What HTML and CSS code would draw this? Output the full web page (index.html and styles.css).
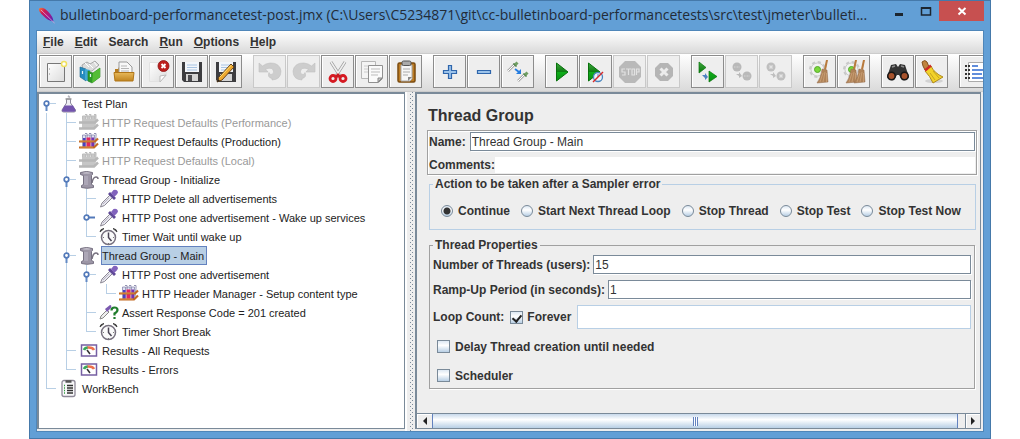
FILE: index.html
```
<!DOCTYPE html>
<html lang="en">
<head>
<meta charset="utf-8">
<title>bulletinboard-performancetest-post.jmx</title>
<link rel="stylesheet" href="styles.css">
</head>
<body>
<svg class="defs" aria-hidden="true">
  <defs>
    <linearGradient id="play" x1="0" y1="0" x2="0" y2="1"><stop offset="0" stop-color="#3fa83f"/><stop offset=".5" stop-color="#0c7c10"/><stop offset=".5" stop-color="#0fb01a"/><stop offset="1" stop-color="#0a8a12"/></linearGradient>
    <linearGradient id="paper" x1="0" y1="0" x2="1" y2="1"><stop offset="0" stop-color="#fff"/><stop offset="1" stop-color="#dcdcdc"/></linearGradient>
    <linearGradient id="gold" x1="0" y1="0" x2="0" y2="1"><stop offset="0" stop-color="#e8b95a"/><stop offset="1" stop-color="#c08420"/></linearGradient>
    <linearGradient id="feather" x1="0" y1="0" x2="1" y2="1"><stop offset="0" stop-color="#f08a3c"/><stop offset=".3" stop-color="#d01850"/><stop offset=".65" stop-color="#9a1890"/><stop offset="1" stop-color="#3a2ab8"/></linearGradient>
    <symbol id="flask" viewBox="0 0 20 19"><path d="M7.500 5h4v4l5 7q.5 2-1.500 2H4.500q-2 0-1.500-2l4.500-7z" fill="#eeeef4" stroke="#8d8a9c"/><path d="M5.500 11.500h8.500l2.500 4.500q0 1.700-1.500 1.700H4.500q-1.700 0-1.500-1.700z" fill="#7353ad"/><path d="M6.500 5h6" stroke="#999" stroke-width="1.500"/><path d="M8.500 3l1-2 2 2-1 1z" fill="#b4b4bc"/></symbol>
    <symbol id="rack" viewBox="0 0 20 19"><path d="M3.500 3h3v12h-3zM8 3h3v12H8zM12.500 3h3v12h-3z" fill="#dfe2f2" stroke="#8888b0" stroke-width=".8"/><path d="M4 6h2.500v9H4z" fill="#4c40c0"/><path d="M7.500 5.500h4V15h-4z" fill="#e02860"/><path d="M12.500 5.500h2.500V15h-2.500z" fill="#7a30b0"/><path d="M6 1.500h2v3M10 1.500h2v3M15 1.500h2v3l-1 8" fill="none" stroke="#9292b2"/><path d="M0 9.500h16l3-3M0 15.500h15l4-4" fill="none" stroke="#c46a22" stroke-width="2.200"/><path d="M1 9h14M1 15h13" stroke="#e5a054" stroke-width=".7"/></symbol>
    <symbol id="rack-off" viewBox="0 0 20 19"><path d="M3.500 3h3v12h-3zM8 3h3v12H8zM12.500 3h3v12h-3zM6 1.500h2v3M10 1.500h2v3M15 1.500h2v3l-1 8" fill="#c8c8c8" stroke="#bdbdbd"/><path d="M3 6h13v9H3z" fill="#c6c6c6"/><path d="M0 9.500h16l3-3M0 15.500h15l4-4" fill="none" stroke="#b7b7b7" stroke-width="2.500"/></symbol>
    <symbol id="spool" viewBox="0 0 20 19"><path d="M1.500 2.500q6-2 12 0v2l-1 1v9l2 1v2q-7 1.600-12 0v-2l2-1v-9l-3-1z" fill="#9c96a6" stroke="#777182"/><path d="M3 3q5-1.600 9 0-4 1.200-9 0z" fill="#d0ccd6"/><path d="M6 6v9M8 6v9" stroke="#bdb8c8"/><path d="M13 13q1-6 4-6 2 0 2 2" fill="none" stroke="#77717f" stroke-width="1.500"/></symbol>
    <symbol id="dropper" viewBox="0 0 20 19"><path d="M1.500 18l1.500-4 8-8 2.500 2.500-8 8z" fill="#e6e6ee" stroke="#8c8894"/><path d="M4 15l6-6" stroke="#bab5c5"/><path d="M9 5l2-2 6 6-2 2z" fill="#5f4896"/><path d="M12 4l2.500-3Q18 0 19 3q0 2-4 5z" fill="#8263bd"/></symbol>
    <symbol id="clock" viewBox="0 0 20 19"><circle cx="9.500" cy="10.500" r="7" fill="#fafafa" stroke="#77717f" stroke-width="1.500"/><path d="M9.500 5.500v5l3 3.500" fill="none" stroke="#4b4555" stroke-width="1.500"/><path d="M1 5q0-3 4-3.500zM18 5q0-3-4-3.500z" fill="#444" stroke="#444"/><path d="M4 10.500h1M14 10.500h1M9.500 16v1" stroke="#777"/></symbol>
    <symbol id="assert" viewBox="0 0 20 19"><path d="M1 16l1-3 6-6 2 2-6 6z" fill="#eee" stroke="#888"/><path d="M6 6l5-4q2 0 1 3l-4 4z" fill="#7b5ab0"/><path d="M12.500 7.500q0-3 3-3 3 0 3 2.500 0 1.800-3 3.500v2M15.500 14v2" fill="none" stroke="#1f7d2c" stroke-width="2.200"/></symbol>
    <symbol id="gauge" viewBox="0 0 20 19"><path d="M2.500 4h15v11h-15z" fill="#fff" stroke="#765fa3" stroke-width="1.500"/><path d="M5 9q1-2.500 4-2.500" fill="none" stroke="#37a85c" stroke-width="2.500"/><path d="M8.500 6.500q5-.5 6.500 2.500" fill="none" stroke="#ec714d" stroke-width="2.500"/><path d="M8 9l3 4" stroke="#333" stroke-width="1.500"/></symbol>
    <symbol id="bench" viewBox="0 0 20 19"><rect x="3" y="1.500" width="13" height="16" rx="2" fill="#f8f8fa" stroke="#8e8998" stroke-width="1.300"/><path d="M6.500 2.500h6" stroke="#555" stroke-width="2.500"/><path d="M8 6.500h6M8 9h6M8 11.500h6M8 14h6" stroke="#333" stroke-width="1.300"/><path d="M5 6.500h1M5 9h1M5 11.500h1M5 14h1" stroke="#2f9d3c" stroke-width="1.600"/></symbol>
    <symbol id="key-down" viewBox="0 0 20 19"><path d="M7.500 11v6" stroke="#638ac5" stroke-width="2"/><path d="M11 9.500h6" stroke="#b8cfe5"/><circle cx="7.500" cy="9.500" r="2.300" fill="#fff" stroke="#5279b9" stroke-width="1.700"/></symbol>
    <symbol id="key-right" viewBox="0 0 20 19"><path d="M10 9.500h6" stroke="#5279b9" stroke-width="2"/><circle cx="7.500" cy="9.500" r="2.300" fill="#fff" stroke="#5279b9" stroke-width="1.700"/></symbol>
    <symbol id="undo" viewBox="0 0 24 24"><path d="M1 3v9h9L7.500 9Q15 6.500 15.500 11.500q.5 3-2.500 3-2 0-2-2-2 5 3 6v1.500q9-.5 9-9Q21.500 2.500 12 3 7.500 3.500 4.500 6z" fill="#cdcdcd" stroke="#c0c0c0" stroke-width=".6"/></symbol>
    <symbol id="broom" viewBox="0 0 24 24"><path d="M18 0h2l-2 10-2-1z" fill="#b87a3d"/><path d="M14 9l5 1 1 12-11 1q4-5 5-14z" fill="#b08358" stroke="#946a48" stroke-width=".5"/><path d="M15 13l-3 9M17 12l-2 10M18.500 13v9" stroke="#d0a67c" stroke-width=".7"/></symbol>
    <symbol id="gear" viewBox="0 0 24 24"><circle cx="9.500" cy="9.500" r="7" fill="#e6e6e6" stroke="#c9c9c9" stroke-width="3" stroke-dasharray="3 2.500"/><circle cx="9.500" cy="9.500" r="6.500" fill="#f2f2f2" stroke="#ccc"/><circle cx="9.500" cy="9.500" r="3" fill="#7bd83c" stroke="#57a82a"/></symbol>
  </defs>
</svg>

<main class="window">
  <header class="titlebar">
    <svg class="logo" viewBox="0 0 18 18" aria-hidden="true"><path d="M1 2.500q4-2.500 9 3 5 5 5.500 10-6-1-10-5.500Q0 5 1 2.500z" fill="url(#feather)"/><path d="M3 4l13.500 13" stroke="#e8a8d8" stroke-width=".8"/></svg>
    <h1 class="caption">bulletinboard-performancetest-post.jmx (C:\Users\C5234871\git\cc-bulletinboard-performancetests\src\test\jmeter\bulleti...</h1>
    <div class="controls">
      <button class="control" aria-label="Minimize"><svg viewBox="0 0 12 12"><path d="M2 9.500h8" stroke="#1c2630" stroke-width="3"/></svg></button>
      <button class="control" aria-label="Maximize"><svg viewBox="0 0 12 12"><path d="M1.500 3h9v7h-9z" fill="none" stroke="#1c2630" stroke-width="1.500"/><path d="M1 3h10" stroke="#1c2630" stroke-width="2"/></svg></button>
      <button class="control close" aria-label="Close"><svg viewBox="0 0 12 12"><path d="M2.500 3l7 6.500M9.500 3l-7 6.500" stroke="#fff" stroke-width="2"/></svg></button>
    </div>
  </header>

  <div class="client">
    <nav class="menubar">
      <button class="menu"><u>F</u>ile</button>
      <button class="menu"><u>E</u>dit</button>
      <button class="menu">Search</button>
      <button class="menu"><u>R</u>un</button>
      <button class="menu"><u>O</u>ptions</button>
      <button class="menu"><u>H</u>elp</button>
    </nav>

    <div class="toolbar">
      <div class="group">
        <button class="tool" aria-label="New"><svg viewBox="0 0 24 24"><path d="M3.500 3.500h17v18h-17z" fill="url(#paper)" stroke="#777"/><path d="M5 9h1M5 14h1" stroke="#888"/><circle cx="20" cy="4" r="2.500" fill="#fff" stroke="#f0e060" stroke-width="1.500"/></svg></button>
        <button class="tool" aria-label="Templates"><svg viewBox="0 0 24 24"><path d="M4 5l5-3 3 2 5-3 4 4-7 6H5z" fill="#dcdcdc" stroke="#999" stroke-width=".8"/><path d="M7 3l4 4M11 4l4 4M16 2l3 4" stroke="#fff"/><path d="M2 7l6 2v12l-6-4z" fill="#268cc0" stroke="#18638c" stroke-width=".6"/><path d="M7 9l5 1v12l-5-2z" fill="#42a8d2"/><path d="M10 11l5 2 7-5v9l-8 6-4-2z" fill="#2e9b26" stroke="#237c1d" stroke-width=".6"/><path d="M15 13l7-5v9l-8 6z" fill="#54bd35"/><path d="M4.500 11v3M12.500 14v3" stroke="#e4f4f4" stroke-width="1.200"/></svg></button>
        <button class="tool" aria-label="Open"><svg viewBox="0 0 24 24"><path d="M3 13V9h3l1-2h13v14H3z" fill="#b87d20"/><path d="M7 2h8l5 5v9H7z" fill="#f8f8f8" stroke="#999"/><path d="M9 6h6M9 8.500h8M9 11h8" stroke="#b5b5b5"/><path d="M2 12.500h20l-1 8.500H3z" fill="url(#gold)" stroke="#b17618"/></svg></button>
        <button class="tool" aria-label="Close plan"><svg viewBox="0 0 24 24"><path d="M3.500 2.500h17v13l-6 6h-11z" fill="url(#paper)" stroke="#e2e2e2"/><path d="M20 15l-6 7v-6z" fill="#fff" stroke="#bbb"/><circle cx="17.500" cy="6" r="5.500" fill="#bd1f1d" stroke="#8e1414" stroke-width=".8"/><path d="M15.500 4l4 4M19.500 4l-4 4" stroke="#fff" stroke-width="1.800"/></svg></button>
        <button class="tool" aria-label="Save"><svg viewBox="0 0 24 24"><path d="M2 2h20v20H4l-2-2z" fill="#3d3d40"/><path d="M5 2h14v10H5z" fill="#f3f6fa"/><path d="M7 5h10M7 7.500h10M7 10h10" stroke="#a8c4e3"/><path d="M6 14h12v7H6z" fill="#d4d4d4"/><path d="M8 15h4v6H8z" fill="#4c4c50"/></svg></button>
        <button class="tool" aria-label="Save as"><svg viewBox="0 0 24 24"><path d="M2 2h20v20H4l-2-2z" fill="#3d3d40"/><path d="M5 2h14v10H5z" fill="#f3f6fa"/><path d="M7 5h10M7 7.500h10M7 10h10" stroke="#a8c4e3"/><path d="M6 14h12v7H6z" fill="#d4d4d4"/><path d="M3 22l2-5L17 4l3 3L8 20z" fill="#efa92f" stroke="#684218"/><path d="M5.500 17.500L17.500 5" stroke="#ffe37a"/><path d="M3 22l1-3 2 2z" fill="#222"/></svg></button>
      </div>
      <div class="group">
        <button class="tool" disabled aria-label="Undo"><svg viewBox="0 0 24 24"><use href="#undo"/></svg></button>
        <button class="tool" disabled aria-label="Redo"><svg viewBox="0 0 24 24"><use href="#undo" transform="translate(24 0) scale(-1 1)"/></svg></button>
        <button class="tool" aria-label="Cut"><svg viewBox="0 0 24 24"><path d="M5 2l9 14M19 2l-9 14" stroke="#999" stroke-width="3"/><path d="M5 2l9 14M19 2l-9 14" stroke="#f0f0f0" stroke-width="1.500"/><circle cx="7" cy="18.500" r="3" fill="none" stroke="#d51a22" stroke-width="2.800"/><circle cx="17" cy="18.500" r="3" fill="none" stroke="#d51a22" stroke-width="2.800"/><path d="M9 16l3-3 3 3-3 2z" fill="#c81a20"/></svg></button>
        <button class="tool" aria-label="Copy"><svg viewBox="0 0 24 24"><path d="M1.500 1.500h14v17h-14z" fill="#f4f4f4" stroke="#b7b7b7"/><path d="M4 6h8M4 9h8M4 12h4" stroke="#ccc"/><path d="M8.500 5.500h14v13l-4 4h-10z" fill="#fafafa" stroke="#909090"/><path d="M22 18h-4v4z" fill="#c9c9c9" stroke="#888"/><path d="M11 9h9M11 12h9M11 15h7" stroke="#bbb"/></svg></button>
        <button class="tool" aria-label="Paste"><svg viewBox="0 0 24 24"><rect x="4" y="3" width="17" height="19" rx="1.500" fill="#bc7c24" stroke="#7b4b0f" stroke-width="1.500"/><path d="M7 5h11v14l-2 2H7z" fill="#f6f6f6" stroke="#aaa"/><path d="M9 9h7M9 12h7M9 15h5" stroke="#aaa"/><path d="M18 17h-4v4z" fill="#888"/><rect x="8" y="1" width="9" height="4.500" rx="1.500" fill="#aaa" stroke="#555"/></svg></button>
      </div>
      <div class="group">
        <button class="tool" aria-label="Expand all"><svg viewBox="0 0 24 24"><path d="M10.500 5.500h3v5h5v3h-5v5h-3v-5h-5v-3h5z" fill="#9cc3ea" stroke="#2f66ac" stroke-width="1.200"/></svg></button>
        <button class="tool" aria-label="Collapse all"><svg viewBox="0 0 24 24"><path d="M5.500 10.500h13v3h-13z" fill="#9cc3ea" stroke="#2f66ac" stroke-width="1.200"/></svg></button>
        <button class="tool" aria-label="Toggle"><svg viewBox="0 0 24 24"><path d="M2 11l7-7M12 21l6-6" stroke="#aaa" stroke-width="2.500"/><path d="M2 11l7-7M12 21l6-6" stroke="#fff"/><path d="M7.500 3.500l3 3M17.500 13.500l3 3" stroke="#3e7937" stroke-width="1.500"/><path d="M9 5l2.500-2.500M19 15l2.500-2.500" stroke="#719e65" stroke-width="3"/><path d="M9 9l4 3" stroke="#267de0" stroke-width="1.800"/><path d="M15 9v5h-5z" fill="#267de0"/></svg></button>
      </div>
      <div class="group">
        <button class="tool" aria-label="Start"><svg viewBox="0 0 24 24"><path d="M6.500 3v18L18 12z" fill="url(#play)" stroke="#08720c"/></svg></button>
        <button class="tool" aria-label="Start no pauses"><svg viewBox="0 0 24 24"><path d="M4.500 3v18L16 12z" fill="url(#play)" stroke="#08720c"/><circle cx="14" cy="17" r="4.500" fill="#eef3f8" stroke="#4986bf" stroke-width="1.300"/><path d="M14 17v-3" stroke="#4986bf"/><path d="M9 22L19 12" stroke="#d82a2a" stroke-width="1.500"/></svg></button>
        <button class="tool" disabled aria-label="Stop"><svg viewBox="0 0 24 24"><path d="M7 1h10l6 6v10l-6 6H7l-6-6V7z" fill="#b9b9b9"/><path d="M7 9H4v3h3v3H4M8 9h5M10.500 9v6M14 9h2.500v6H14zM18.500 15V9h2.500v3h-2.500" fill="none" stroke="#e2e2e2" stroke-width="1.200"/></svg></button>
        <button class="tool" disabled aria-label="Shutdown"><svg viewBox="0 0 24 24"><path d="M8 3h8l5 5v8l-5 5H8l-5-5V8z" fill="#b5b5b5"/><path d="M8.500 8.500l7 7M15.500 8.500l-7 7" stroke="#ececec" stroke-width="3"/></svg></button>
      </div>
      <div class="group">
        <button class="tool" aria-label="Remote start all"><svg viewBox="0 0 24 24"><path d="M3 2v11l7-5.500zM13 11v11l8-5.500z" fill="url(#play)" stroke="#08720c" stroke-width=".7"/><path d="M6 15h3v-2l3 4-3 3v-2z" fill="#4f83c1"/></svg></button>
        <button class="tool" disabled aria-label="Remote stop all"><svg viewBox="0 0 24 24"><circle cx="7" cy="7" r="4.500" fill="#b9b9b9"/><circle cx="17" cy="16" r="4.500" fill="#b9b9b9"/><path d="M4 7h6M14 16h6" stroke="#ccc" stroke-width="1.500" stroke-dasharray="1 .5"/><path d="M6 14h3v-2l3 4-3 2v-2z" fill="#b9b9b9"/></svg></button>
        <button class="tool" disabled aria-label="Remote shutdown all"><svg viewBox="0 0 24 24"><circle cx="7" cy="7" r="4.500" fill="#bfbfbf"/><circle cx="17" cy="16" r="4.500" fill="#bfbfbf"/><path d="M5.500 5.500l3 3M8.500 5.500l-3 3M15.500 14.500l3 3M18.500 14.500l-3 3" stroke="#e4e4e4" stroke-width="1.300"/><path d="M6 14h3v-2l3 4-3 2v-2z" fill="#bfbfbf"/></svg></button>
      </div>
      <div class="group">
        <button class="tool" aria-label="Clear"><svg viewBox="0 0 24 24"><use href="#gear" width="24" height="24"/><use href="#broom" width="24" height="24"/></svg></button>
        <button class="tool" aria-label="Clear all"><svg viewBox="0 0 24 24"><use href="#gear" width="24" height="24"/><use href="#broom" x="-5" width="24" height="24"/><use href="#broom" x="3" width="24" height="24"/></svg></button>
      </div>
      <div class="group">
        <button class="tool" aria-label="Search tree"><svg viewBox="0 0 24 24"><path d="M5 5l5-1 2 3 2-3 5 1 4 12q-2 4-7 3l-3-5h-2l-3 5q-5 1-7-3z" fill="#333"/><circle cx="5.500" cy="16" r="3.700" fill="#a6522c" stroke="#161616" stroke-width="1.500"/><circle cx="18.500" cy="16" r="3.700" fill="#a6522c" stroke="#161616" stroke-width="1.500"/><path d="M6 7l3-1M15 6l3 1" stroke="#8c8c8c" stroke-width="1.500"/></svg></button>
        <button class="tool" aria-label="Reset search"><svg viewBox="0 0 24 24"><ellipse cx="14" cy="21" rx="9" ry="2" fill="#d2d2d2"/><path d="M2 2q3-3 5 0l2 5-4 3-2-4z" fill="#bf843e" stroke="#84521e"/><path d="M5 11l6-5q3 7 12 11-5 3-10 6Q10 16 5 11z" fill="#f2d22b" stroke="#ae891d"/><path d="M5 10.500l6-5" stroke="#cc2a24" stroke-width="2.500"/><path d="M10 13l5 7M13 11l6 7" stroke="#c8a520"/></svg></button>
      </div>
      <div class="group">
        <button class="tool" aria-label="Function helper"><svg viewBox="0 0 24 24"><path d="M4.500 2.500h19v19h-19z" fill="#fff" stroke="#aaa"/><path d="M1 6h5M1 10h5M1 14h5M1 18h5" stroke="#333" stroke-width="2" stroke-dasharray="2 1"/><path d="M8 6h6M8 10h14M8 14h10M8 18h14" stroke="#2d68d0" stroke-width="1.300"/></svg></button>
      </div>
    </div>

    <div class="split">
      <section class="tree" aria-label="Test plan">
        <div class="row"><svg class="cell"><use href="#key-down"/></svg><svg class="icon"><use href="#flask"/></svg><span class="node">Test Plan</span></div>
        <div class="row"><i class="cell bar"></i><i class="cell tee"></i><svg class="icon"><use href="#rack-off"/></svg><span class="node off">HTTP Request Defaults (Performance)</span></div>
        <div class="row"><i class="cell bar"></i><i class="cell tee"></i><svg class="icon"><use href="#rack"/></svg><span class="node">HTTP Request Defaults (Production)</span></div>
        <div class="row"><i class="cell bar"></i><i class="cell tee"></i><svg class="icon"><use href="#rack-off"/></svg><span class="node off">HTTP Request Defaults (Local)</span></div>
        <div class="row"><i class="cell bar"></i><svg class="cell bar"><use href="#key-down"/></svg><svg class="icon"><use href="#spool"/></svg><span class="node">Thread Group - Initialize</span></div>
        <div class="row"><i class="cell bar"></i><i class="cell bar"></i><i class="cell tee"></i><svg class="icon"><use href="#dropper"/></svg><span class="node">HTTP Delete all advertisements</span></div>
        <div class="row"><i class="cell bar"></i><i class="cell bar"></i><svg class="cell bar"><use href="#key-right"/></svg><svg class="icon"><use href="#dropper"/></svg><span class="node">HTTP Post one advertisement - Wake up services</span></div>
        <div class="row"><i class="cell bar"></i><i class="cell bar"></i><i class="cell elbow"></i><svg class="icon"><use href="#clock"/></svg><span class="node">Timer Wait until wake up</span></div>
        <div class="row"><i class="cell bar"></i><svg class="cell bar"><use href="#key-down"/></svg><svg class="icon"><use href="#spool"/></svg><span class="node selected">Thread Group - Main</span></div>
        <div class="row"><i class="cell bar"></i><i class="cell bar"></i><svg class="cell bar"><use href="#key-down"/></svg><svg class="icon"><use href="#dropper"/></svg><span class="node">HTTP Post one advertisement</span></div>
        <div class="row"><i class="cell bar"></i><i class="cell bar"></i><i class="cell bar"></i><i class="cell elbow"></i><svg class="icon"><use href="#rack"/></svg><span class="node">HTTP Header Manager - Setup content type</span></div>
        <div class="row"><i class="cell bar"></i><i class="cell bar"></i><i class="cell tee"></i><svg class="icon"><use href="#assert"/></svg><span class="node">Assert Response Code = 201 created</span></div>
        <div class="row"><i class="cell bar"></i><i class="cell bar"></i><i class="cell elbow"></i><svg class="icon"><use href="#clock"/></svg><span class="node">Timer Short Break</span></div>
        <div class="row"><i class="cell bar"></i><i class="cell tee"></i><svg class="icon"><use href="#gauge"/></svg><span class="node">Results - All Requests</span></div>
        <div class="row"><i class="cell bar"></i><i class="cell elbow"></i><svg class="icon"><use href="#gauge"/></svg><span class="node">Results - Errors</span></div>
        <div class="row"><i class="cell elbow"></i><svg class="icon"><use href="#bench"/></svg><span class="node">WorkBench</span></div>
      </section>

      <div class="divider"></div>

      <section class="editor">
        <form class="form">
          <h2 class="heading">Thread Group</h2>
          <div class="identity">
            <div class="line"><label for="name">Name:</label><input class="field" id="name" type="text" value="Thread Group - Main"></div>
            <div class="line comments"><label for="comments">Comments:</label><input class="plain" id="comments" type="text"></div>
          </div>

          <fieldset class="panel action">
            <legend>Action to be taken after a Sampler error</legend>
            <label class="option"><input class="radio" type="radio" name="action" checked>Continue</label>
            <label class="option"><input class="radio" type="radio" name="action">Start Next Thread Loop</label>
            <label class="option"><input class="radio" type="radio" name="action">Stop Thread</label>
            <label class="option"><input class="radio" type="radio" name="action">Stop Test</label>
            <label class="option"><input class="radio" type="radio" name="action">Stop Test Now</label>
          </fieldset>

          <fieldset class="panel threads">
            <legend>Thread Properties</legend>
            <div class="line"><label for="users">Number of Threads (users):</label><input class="field" id="users" type="text" value="15"></div>
            <div class="line"><label for="ramp">Ramp-Up Period (in seconds):</label><input class="field" id="ramp" type="text" value="1"></div>
            <div class="line loop"><label for="loops">Loop Count:</label><label class="option forever"><input class="check" type="checkbox" checked>Forever</label><input class="field inactive" id="loops" type="text" disabled></div>
            <label class="option single"><input class="check" type="checkbox">Delay Thread creation until needed</label>
            <label class="option single"><input class="check" type="checkbox">Scheduler</label>
          </fieldset>
        </form>
        <div class="scrollbar">
          <button class="arrow" aria-label="Scroll left"><svg viewBox="0 0 14 14"><path d="M9 3v8L5 7z" fill="#222"/></svg></button>
          <div class="track"><div class="thumb"><span class="grip"></span></div></div>
          <button class="arrow right" aria-label="Scroll right"><svg viewBox="0 0 14 14"><path d="M5 3v8l4-4z" fill="#222"/></svg></button>
        </div>
      </section>
    </div>
  </div>
</main>
</body>
</html>
```
FILE: styles.css
```
* { box-sizing: border-box; }

body {
  margin: 0;
  padding: 0 29px;
  background: #fff;
  color: #333;
  font: bold 12px/16px "Liberation Sans", Arial, sans-serif;
}

button, input { font: inherit; color: inherit; margin: 0; }
button { border: 0; padding: 0; background: none; }
.defs { position: absolute; width: 0; height: 0; }

/* Window frame */
.window {
  display: flex;
  flex-direction: column;
  min-height: 100vh;
  padding: 0 6px 6px;
  border: 1px solid #4579aa;
  background: #629fd6;
}
.titlebar { display: flex; align-items: flex-start; height: 29px; }
.logo { flex: none; width: 18px; height: 18px; margin: 5px 4px 0 2px; }
.caption {
  flex: 1;
  min-width: 0;
  margin: 0;
  overflow: hidden;
  white-space: nowrap;
  color: #222c38;
  font: 14px/28px "Open Sans", "Noto Sans", sans-serif;
}
.controls { display: flex; }
.control { display: grid; place-items: center; width: 27px; height: 20px; }
.control svg { width: 12px; height: 12px; }
.close { width: 45px; background: #c75050; }

.client {
  display: flex;
  flex: 1;
  flex-direction: column;
  border: 1px solid #4f86b9;
  background: #eee;
}

/* Menu and toolbar */
.menubar {
  display: flex;
  gap: 11px;
  height: 23px;
  padding: 0 6px;
  border-bottom: 1px solid #ccc;
  background: linear-gradient(#fff, #dadada);
}
.toolbar {
  display: flex;
  gap: 11px;
  height: 38px;
  padding: 1px 2px 0;
  overflow: hidden;
  border-bottom: 1px solid #ccc;
  background: linear-gradient(#fff, #dadada);
}
.group { display: flex; flex: none; gap: 1px; }
.tool {
  display: grid;
  place-items: center;
  width: 33px;
  height: 33px;
  border: 1px solid #8c8c8c;
  box-shadow: inset 1px 1px #fff;
  background: #eee;
}
.tool:disabled { border-color: #c9c9c9; box-shadow: none; }
.tool svg { width: 24px; height: 24px; }

/* Split pane */
.split { display: flex; flex: 1; }
.tree {
  flex: none;
  width: 368px;
  margin-bottom: 2px;
  border: 1px solid #7a8a99;
  border-width: 2px 1px 1px 2px;
  background: #fff;
  color: #222;
  font: 11px/19px "Liberation Sans", Arial, sans-serif;
}
.row { display: flex; height: 19px; }
.cell { flex: none; width: 20px; height: 19px; }
.icon { flex: none; width: 20px; height: 19px; margin-right: 2px; }
.bar { background: linear-gradient(#b8cfe5, #b8cfe5) 7px 0 / 1px 19px no-repeat; }
.tee {
  background:
    linear-gradient(#b8cfe5, #b8cfe5) 7px 0 / 1px 19px no-repeat,
    linear-gradient(#b8cfe5, #b8cfe5) 7px 9px / 10px 1px no-repeat;
}
.elbow {
  background:
    linear-gradient(#b8cfe5, #b8cfe5) 7px 0 / 1px 10px no-repeat,
    linear-gradient(#b8cfe5, #b8cfe5) 7px 9px / 10px 1px no-repeat;
}
.node { height: 19px; padding-right: 2px; border: 1px solid transparent; white-space: nowrap; }
.off { color: #999; }
.selected { border-color: #6382bf; background: #b8cfe5; }
.divider {
  flex: none;
  width: 10px;
  border-left: 2px solid #fff;
  background:
    linear-gradient(90deg, #eee 3px, transparent 3px 6px, #eee 6px),
    conic-gradient(from 0deg at 1px 1px, transparent 75%, #7a8a99 0) 3px 2px / 4px 4px,
    conic-gradient(from 0deg at 1px 1px, transparent 75%, #7a8a99 0) 1px 4px / 4px 4px,
    #eee;
}

.editor {
  display: flex;
  flex: 1;
  flex-direction: column;
  min-width: 0;
  margin: 0 2px 2px 0;
  border: 1px solid #7a8a99;
  border-width: 2px 1px 1px 2px;
}
.form { flex: 1; padding: 10px 3px 0 10px; }
.heading { margin: 0 0 2px 1px; font-size: 16px; line-height: 24px; }
.identity {
  padding: 1px;
  border: 1px solid #a0a0a0;
  box-shadow: 1px 1px #fff, inset 1px 1px #fff;
}
.line { display: flex; align-items: center; }
.line label { flex: none; }
.field {
  flex: 1;
  min-width: 0;
  height: 19px;
  padding: 0 1px;
  border: 1px solid #7a8a99;
  box-shadow: 1px 1px #fff;
  background: #fff;
  font-weight: normal;
}
.identity .field { margin-left: 4px; }
.comments { margin-top: 6px; }
.plain { flex: 1; min-width: 0; height: 16px; padding: 0; border: 0; background: #fff; font-weight: normal; }

.panel {
  min-width: 0;
  margin: 0 1px 0 2px;
  border: 1px solid #b8cfe5;
}
.panel legend { padding: 0 2px; line-height: 16px; }
.action { display: flex; flex-wrap: wrap; gap: 11px; margin-top: 1px; padding: 11px 0 10px 11px; }
.action legend { margin-left: -8px; }
.option { display: flex; align-items: center; gap: 5px; }
.radio {
  appearance: none;
  width: 12px;
  height: 12px;
  border: 1px solid #7a8a99;
  border-radius: 50%;
  background: linear-gradient(#dde8f3, #fff 40%, #b8cfe5);
}
.radio:checked { background: radial-gradient(circle, #333 3px, transparent 4px), linear-gradient(#dde8f3, #fff 40%, #b8cfe5); }
.check {
  appearance: none;
  width: 13px;
  height: 13px;
  border: 1px solid #7a8a99;
  background: linear-gradient(#dde8f3, #fff 40%, #b8cfe5);
}
.check:checked { display: grid; place-items: center; }
.check:checked::after {
  width: 4px;
  height: 7px;
  border: solid #222;
  border-width: 0 2px 2px 0;
  content: "";
  transform: rotate(40deg);
}
.threads {
  margin-top: 7px;
  margin-right: 2px;
  padding: 2px 3px 6px;
  border-color: #a0a0a0;
  box-shadow: 1px 1px #fff;
}
.threads .line { gap: 3px; margin-bottom: 6px; }
.threads .loop { gap: 6px; margin-bottom: 11px; }
.loop .inactive { height: 24px; border-color: #b8cfe5; box-shadow: none; }
.forever { gap: 4px; }
.single { height: 13px; margin: 0 0 16px 4px; }
.single:last-child { margin-bottom: 0; }

/* Scroll bar */
.scrollbar { display: flex; height: 15px; border-top: 1px solid #7a8a99; }
.arrow { display: grid; place-items: center; width: 15px; box-shadow: inset 1px 1px #fff; }
.arrow.right { border-left: 1px solid #7a8a99; }
.arrow svg { width: 14px; height: 14px; }
.track { flex: 1; padding-right: 7px; }
.thumb {
  display: grid;
  place-items: center;
  height: 14px;
  border: solid #6382bf;
  border-width: 0 1px;
  background: linear-gradient(#c8d9eb, #fff 40%, #b8cfe5);
}
.grip { width: 5px; height: 9px; background: repeating-linear-gradient(90deg, #6382bf 0 1px, #fff 1px 2px); }
```
